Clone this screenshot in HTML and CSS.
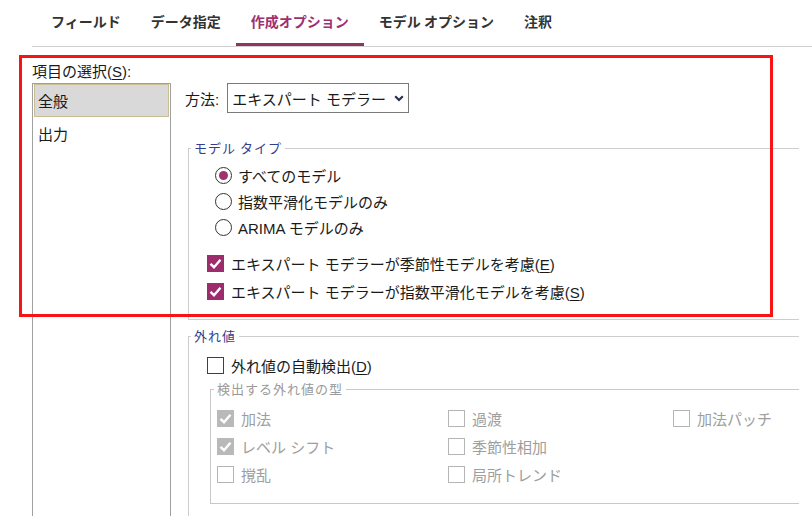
FILE: index.html
```html
<!DOCTYPE html>
<html lang="ja">
<head>
  <meta charset="UTF-8">
  <meta name="viewport" content="width=device-width, initial-scale=1.0">
  <title>作成オプション</title>
  <link rel="stylesheet" href="styles.css">
</head>
<body>

  <!-- Tab bar -->
  <nav class="tabs">
    <a class="tab">フィールド</a>
    <a class="tab">データ指定</a>
    <a class="tab active">作成オプション</a>
    <a class="tab">モデル オプション</a>
    <a class="tab">注釈</a>
  </nav>

  <div class="dialog">
    <div class="section-label">項目の選択(<u>S</u>):</div>

    <div class="dialog-body">
      <ul class="item-list">
        <li class="selected">全般</li>
        <li>出力</li>
      </ul>

      <div class="panel">
        <div class="method-row">
          <span>方法:</span>
          <div class="select">
            <span>エキスパート モデラー</span>
            <svg class="chevron" width="10" height="7" viewBox="0 0 10 7"><path d="M1.2 1.3 L5 5 L8.8 1.3" fill="none" stroke="#26324a" stroke-width="2.2"/></svg>
          </div>
        </div>

        <!-- Model type -->
        <fieldset class="group">
          <legend>モデル タイプ</legend>
          <div class="group-body model-body">
            <div class="radio-list">
              <label class="radio checked"><span class="circle"></span><span>すべてのモデル</span></label>
              <label class="radio"><span class="circle"></span><span>指数平滑化モデルのみ</span></label>
              <label class="radio"><span class="circle"></span><span>ARIMA モデルのみ</span></label>
            </div>
            <label class="check on"><span class="box"><svg viewBox="0 0 17 17"><path d="M3.5 8.8 L7 12.2 L13.5 4.8" fill="none" stroke="#fff" stroke-width="2.4"/></svg></span><span>エキスパート モデラーが季節性モデルを考慮(<u>E</u>)</span></label>
            <label class="check on"><span class="box"><svg viewBox="0 0 17 17"><path d="M3.5 8.8 L7 12.2 L13.5 4.8" fill="none" stroke="#fff" stroke-width="2.4"/></svg></span><span>エキスパート モデラーが指数平滑化モデルを考慮(<u>S</u>)</span></label>
          </div>
        </fieldset>

        <!-- Outliers -->
        <fieldset class="group outliers">
          <legend>外れ値</legend>
          <div class="group-body outlier-body">
            <label class="check"><span class="box"></span><span>外れ値の自動検出(<u>D</u>)</span></label>

            <fieldset class="group sub disabled">
              <legend>検出する外れ値の型</legend>
              <div class="type-grid">
                <label class="check on"><span class="box"><svg viewBox="0 0 17 17"><path d="M3.5 8.8 L7 12.2 L13.5 4.8" fill="none" stroke="#fff" stroke-width="2.4"/></svg></span><span>加法</span></label>
                <label class="check"><span class="box"></span><span>過渡</span></label>
                <label class="check"><span class="box"></span><span>加法パッチ</span></label>
                <label class="check on"><span class="box"><svg viewBox="0 0 17 17"><path d="M3.5 8.8 L7 12.2 L13.5 4.8" fill="none" stroke="#fff" stroke-width="2.4"/></svg></span><span>レベル シフト</span></label>
                <label class="check"><span class="box"></span><span>季節性相加</span></label>
                <span></span>
                <label class="check"><span class="box"></span><span>撹乱</span></label>
                <label class="check"><span class="box"></span><span>局所トレンド</span></label>
              </div>
            </fieldset>
          </div>
        </fieldset>
      </div>
    </div>
  </div>

  <!-- Red frame marking the general settings -->
  <div class="highlight"></div>

</body>
</html>
```

FILE: styles.css
```css
/* Page basics */
html, body {
  margin: 0;
  height: 100%;
  overflow: hidden;
  background-color: #fff;
}

body {
  position: relative;
  font-family: "Liberation Sans", "Noto Sans CJK JP", sans-serif;
  font-size: 15px;
  color: #1a1a1a;
}

u {
  text-decoration: underline;
  text-underline-offset: 2px;
}

/* Tabs */
.tabs {
  display: flex;
  margin-left: 32px;
  padding-left: 4px;
  height: 46px;
  border-bottom: 1px solid #d0d0d0;
}

.tab {
  display: flex;
  align-items: center;
  padding: 0 15px 4px;
  font-family: "Noto Sans CJK JP", sans-serif;
  font-size: 14px;
  font-weight: bold;
  color: #333;
  white-space: nowrap;
}

.tab.active {
  color: #a0306f;
  box-shadow: inset 0 -3px 0 #8e3566;
}

/* Dialog */
.dialog {
  padding-left: 32px;
}

.section-label {
  margin-top: 15px;
  line-height: 20px;
  height: 21px;
}

.dialog-body {
  display: flex;
  height: 440px;
}

/* Item list on the left */
.item-list {
  list-style: none;
  margin: 0;
  padding: 0 1px;
  width: 135px;
  border: 1px solid #a0a0a0;
}

.item-list li {
  height: 31px;
  line-height: 33px;
  padding-left: 3px;
  border: 1px solid transparent;
}

.item-list li.selected {
  background-color: #d9d9d9;
  border-color: #c9bd94;
}

/* Right panel */
.panel {
  width: 628px;
  overflow: hidden;
}

.method-row {
  display: flex;
  align-items: center;
  gap: 8px;
  padding-left: 14px;
  height: 30px;
}

.select {
  display: flex;
  align-items: center;
  width: 176px;
  height: 28px;
  padding-left: 4px;
  border: 1px solid #7a7a7a;
  white-space: nowrap;
}

.chevron {
  margin-left: 8px;
}

/* Group boxes */
.group {
  margin: 26px 0 0 17px;
  padding: 0;
  width: 700px;
  border: 1px solid #cdcdcd;
  min-width: 0;
}

.group legend {
  margin-left: 2px;
  padding: 0 3px;
  font-family: "Noto Sans CJK JP", sans-serif;
  font-size: 13px;
  line-height: 18px;
  letter-spacing: 1px;
  color: #33408f;
}

.model-body {
  padding: 5px 0 14px 18px;
}

.radio-list {
  margin-left: 8px;
  margin-bottom: 9px;
}

/* Radio buttons */
.radio {
  display: flex;
  align-items: center;
  gap: 6px;
  height: 26px;
}

.circle {
  width: 15px;
  height: 15px;
  border: 1.5px solid #333;
  border-radius: 50%;
  position: relative;
}

.radio.checked .circle::after {
  content: "";
  position: absolute;
  left: 3px;
  top: 3px;
  width: 9px;
  height: 9px;
  border-radius: 50%;
  background-color: #a3306f;
}

/* Check boxes */
.check {
  display: flex;
  align-items: center;
  gap: 7px;
  height: 28px;
  white-space: nowrap;
}

.box {
  display: block;
  width: 15px;
  height: 15px;
  border: 1px solid #3a4252;
  background-color: #fff;
}

.box svg {
  display: block;
  width: 17px;
  height: 17px;
  margin: -1px;
}

.check.on .box {
  background-color: #9c2c6c;
  border-color: #9c2c6c;
}

/* Outliers */
.group.outliers {
  margin-top: 7px;
  height: 220px;
}

.outlier-body {
  padding: 6px 0 0 18px;
}

.group.sub {
  margin: 1px 0 0 3px;
  width: 680px;
  border-color: #c8c8c8;
}

.group.sub legend {
  color: #9a9a9a;
  margin-left: 3px;
}

.type-grid {
  display: grid;
  grid-template-columns: 231px 225px auto;
  padding: 6px 0 15px 6px;
}

.disabled .check {
  color: #9e9e9e;
}

.disabled .box {
  border-color: #b5b5b5;
}

.disabled .check.on .box {
  background-color: #b9b9b9;
  border-color: #b9b9b9;
}

/* Red frame drawn over the dialog */
.highlight {
  position: absolute;
  left: 19px;
  top: 55px;
  width: 748px;
  height: 256px;
  border: 3px solid #f51515;
  pointer-events: none;
}
```
